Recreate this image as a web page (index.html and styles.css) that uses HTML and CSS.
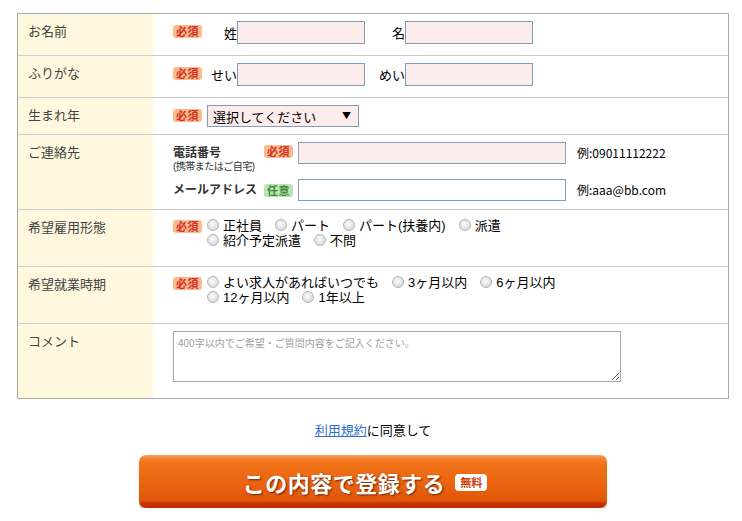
FILE: index.html
```html
<!DOCTYPE html>
<html lang="ja">
<head>
<meta charset="utf-8">
<title>登録フォーム</title>
<link rel="stylesheet" href="styles.css">
</head>
<body>
<div class="page">
  <div class="form">
    <div class="row h41">
      <div class="th">お名前</div>
      <div class="td name-line">
        <span class="badge req">必須</span>
        <span class="nlabel first">姓</span><input class="txt pink w128" type="text">
        <span class="nlabel second">名</span><input class="txt pink w128" type="text">
      </div>
    </div>
    <div class="row h41">
      <div class="th">ふりがな</div>
      <div class="td name-line">
        <span class="badge req">必須</span>
        <span class="nlabel first">せい</span><input class="txt pink w128" type="text">
        <span class="nlabel second">めい</span><input class="txt pink w128" type="text">
      </div>
    </div>
    <div class="row h36">
      <div class="th">生まれ年</div>
      <div class="td name-line">
        <span class="badge req">必須</span>
        <span class="select-wrap"><select class="sel"><option>選択してください</option></select></span>
      </div>
    </div>
    <div class="row h74">
      <div class="th">ご連絡先</div>
      <div class="td">
        <div class="contact">
          <div class="c-label top"><span class="c-main">電話番号</span><span class="c-sub">(携帯またはご自宅)</span></div>
          <span class="badge req top">必須</span>
          <input class="txt pink w268" type="text">
          <span class="example">例:09011112222</span>
          <div class="c-label"><span class="c-main">メールアドレス</span></div>
          <span class="badge opt">任意</span>
          <input class="txt w268" type="text">
          <span class="example">例:aaa@bb.com</span>
        </div>
      </div>
    </div>
    <div class="row h56">
      <div class="th">希望雇用形態</div>
      <div class="td radio-line">
        <span class="badge req radio-badge">必須</span>
        <div class="options">
          <label class="opt-item"><input type="radio" name="koyo" class="radio">正社員</label>
          <label class="opt-item"><input type="radio" name="koyo" class="radio">パート</label>
          <label class="opt-item"><input type="radio" name="koyo" class="radio">パート(扶養内)</label>
          <label class="opt-item"><input type="radio" name="koyo" class="radio">派遣</label>
          <label class="opt-item"><input type="radio" name="koyo" class="radio">紹介予定派遣</label>
          <label class="opt-item"><input type="radio" name="koyo" class="radio">不問</label>
        </div>
      </div>
    </div>
    <div class="row h56">
      <div class="th">希望就業時期</div>
      <div class="td radio-line">
        <span class="badge req radio-badge">必須</span>
        <div class="options">
          <label class="opt-item"><input type="radio" name="jiki" class="radio">よい求人があればいつでも</label>
          <label class="opt-item"><input type="radio" name="jiki" class="radio">3ヶ月以内</label>
          <label class="opt-item"><input type="radio" name="jiki" class="radio">6ヶ月以内</label>
          <label class="opt-item"><input type="radio" name="jiki" class="radio">12ヶ月以内</label>
          <label class="opt-item"><input type="radio" name="jiki" class="radio">1年以上</label>
        </div>
      </div>
    </div>
    <div class="row h74">
      <div class="th">コメント</div>
      <div class="td">
        <textarea class="comment" placeholder="400字以内でご希望・ご質問内容をご記入ください。"></textarea>
      </div>
    </div>
  </div>

  <p class="agree"><a href="#" class="terms">利用規約</a>に同意して</p>

  <div class="submit-wrap">
    <button class="submit" type="button"><span class="submit-text">この内容で登録する</span><span class="free">無料</span></button>
  </div>
</div>
</body>
</html>
```

FILE: styles.css
```css
* { box-sizing: border-box; }

body {
  margin: 0;
  background: #fff;
  font-family: "Noto Sans CJK JP", "Noto Sans", sans-serif;
  color: #000;
}

.page {
  width: 712px;
  margin: 13px 0 0 17px;
}

.form {
  border: 1px solid #aaa;
  width: 712px;
}

.row {
  display: grid;
  grid-template-columns: 135px 1fr;
  border-top: 1px solid #ccc;
  box-sizing: content-box;
}
.row:first-child { border-top: none; }

.h41 { height: 41px; }
.h36 { height: 36px; }
.h74 { height: 74px; }
.h56 { height: 56px; }

.th {
  background: #fff8df;
  padding: 8px 10px 0 10px;
  font-size: 13px;
  line-height: 18px;
  color: #444;
}

.td {
  padding: 7px 0 0 20px;
  font-size: 13px;
}

.name-line {
  display: flex;
  align-items: flex-start;
}
.name-line .badge { margin-top: 4px; }

.badge {
  display: inline-block;
  height: 13px;
  line-height: 13px;
  padding: 0 3px;
  border-radius: 3px;
  font-size: 11px;
  font-weight: bold;
  letter-spacing: 0.5px;
  flex: none;
}
.badge.req { background: #fbbb8c; color: #d2302a; }
.badge.opt { background: #b9e4b2; color: #3c8c34; }

.nlabel {
  display: inline-block;
  text-align: right;
  font-size: 13px;
  line-height: 23px;
  color: #000;
}
.nlabel.first { width: 35px; }
.nlabel.second { width: 40px; }

.txt {
  height: 23px;
  border: 1px solid #7f9db9;
  background: #fff;
  padding: 2px 3px;
  font: 13px "Noto Sans CJK JP", sans-serif;
  margin: 0;
}
.txt.pink { background: #fdecec; }
.w128 { width: 128px; }
.w268 { width: 268px; height: 22px; }

.select-wrap {
  position: relative;
  display: inline-block;
  margin-left: 5px;
}
.sel {
  appearance: none;
  -webkit-appearance: none;
  width: 152px;
  height: 22px;
  border: 1px solid #7f9db9;
  background: #fdecec;
  font: 13px "Noto Sans CJK JP", sans-serif;
  color: #000;
  padding: 0 0 0 5px;
  margin: 0;
  border-radius: 0;
}
.select-wrap::after {
  content: "\25BC";
  position: absolute;
  right: 8px;
  top: 4px;
  font-size: 9px;
  line-height: 14px;
  color: #000;
  pointer-events: none;
}

.contact {
  display: grid;
  grid-template-columns: 91px 34px 279px auto;
  grid-template-rows: 37px 22px;
  align-items: center;
}
.contact .top { align-self: start; }
.c-label.top { padding-top: 3px; }
.badge.top { margin-top: 3px; justify-self: start; }
.contact .badge { justify-self: start; }
.c-label {
  display: flex;
  flex-direction: column;
  font-family: "Liberation Sans", "Noto Sans CJK JP", sans-serif;
}
.c-main {
  font-size: 12px;
  line-height: 16px;
  font-weight: bold;
  color: #333;
}
.c-sub {
  font-size: 10px;
  line-height: 12px;
  color: #333;
  letter-spacing: -0.5px;
  white-space: nowrap;
}
.contact .txt { align-self: start; }
.contact .example { align-self: start; line-height: 22px; }
.example {
  font-size: 12px;
  color: #000;
  white-space: nowrap;
}

.radio-line {
  display: flex;
  align-items: flex-start;
  padding-top: 8px;
}
.radio-badge { margin-top: 2px; }
.options {
  display: flex;
  flex-wrap: wrap;
  width: 380px;
  margin-left: 5px;
  line-height: 15px;
  font-size: 13px;
  font-family: "Liberation Sans", "Noto Sans CJK JP", sans-serif;
}
.opt-item {
  display: inline-flex;
  align-items: center;
  margin-right: 13px;
  white-space: nowrap;
}
.radio {
  appearance: none;
  -webkit-appearance: none;
  width: 12px;
  height: 12px;
  margin: -2px 4px 0 0;
  border: 1px solid #b5b5b5;
  border-radius: 50%;
  background: radial-gradient(circle at 45% 40%, #fbfbfb 0%, #e8e8e8 45%, #cfcfcf 100%);
  flex: none;
}

.comment {
  display: block;
  width: 448px;
  height: 51px;
  border: 1px solid #a9a9a9;
  padding: 4px 4px;
  font: 10px/13px "Noto Sans CJK JP", sans-serif;
  margin: 0;
  resize: vertical;
}
.comment::placeholder { color: #a0a0a0; }

.agree {
  margin: 22px 0 0;
  text-align: center;
  font-size: 13px;
  line-height: 18px;
  color: #000;
}
.terms { color: #2f6fd0; text-decoration: underline; }

.submit-wrap {
  display: flex;
  justify-content: center;
  margin-top: 16px;
}
.submit {
  width: 468px;
  height: 53px;
  border: none;
  border-radius: 7px;
  padding: 0 16px 0 0;
  display: flex;
  align-items: center;
  justify-content: center;
  gap: 10px;
  background: linear-gradient(to bottom, #f8a468 0, #f5842e 3px, #f07218 9px, #e9640f 55%, #e0560a 86%, #c83400 91%, #c02c00 100%);
  box-shadow: 0 2px 1px rgba(0,0,0,0.28);
  cursor: pointer;
}
.submit-text {
  color: #fff;
  font: bold 22px/26px "Noto Sans CJK JP", sans-serif;
  text-shadow: 1px 1px 2px rgba(90, 25, 0, 0.85);
  letter-spacing: 0.5px;
}
.free {
  background: #fff;
  color: #d0400a;
  border-radius: 4px;
  font: bold 11px/17px "Noto Sans CJK JP", sans-serif;
  padding: 0 5px;
  height: 17px;
  margin-top: 2px;
}
```
